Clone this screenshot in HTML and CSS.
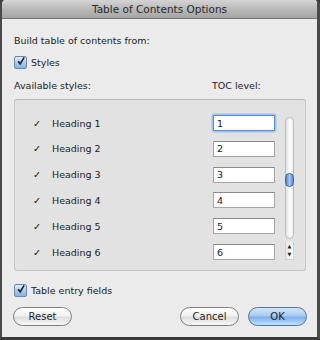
FILE: index.html
```html
<!doctype html>
<html>
<head>
<meta charset="utf-8">
<title>Table of Contents Options</title>
<link rel="stylesheet" href="styles.css">
</head>
<body>
<div class="win">
	<div class="titlebar">Table of Contents Options</div>
	<div class="body">
		<p class="label first">Build table of contents from:</p>
		<label class="check"><span class="box"><svg viewBox="0 0 12 12" width="12" height="12"><path d="M2.6 6.2 L5 9.4 L9.8 1.6" fill="none" stroke="#1d2430" stroke-width="2"/></svg></span>Styles</label>
		<div class="heads">
			<span class="avail">Available styles:</span>
			<span>TOC level:</span>
		</div>
		<div class="group">
			<ul class="rows">
				<li><i>&#10003;</i><span>Heading 1</span><input class="focus" type="text" value="1"></li>
				<li><i>&#10003;</i><span>Heading 2</span><input type="text" value="2"></li>
				<li><i>&#10003;</i><span>Heading 3</span><input type="text" value="3"></li>
				<li><i>&#10003;</i><span>Heading 4</span><input type="text" value="4"></li>
				<li><i>&#10003;</i><span>Heading 5</span><input type="text" value="5"></li>
				<li><i>&#10003;</i><span>Heading 6</span><input type="text" value="6"></li>
			</ul>
			<div class="scroll">
				<div class="track"><div class="thumb"></div></div>
				<div class="arrows"><b>&#9650;</b><b>&#9660;</b></div>
			</div>
		</div>
		<label class="check entry"><span class="box"><svg viewBox="0 0 12 12" width="12" height="12"><path d="M2.6 6.2 L5 9.4 L9.8 1.6" fill="none" stroke="#1d2430" stroke-width="2"/></svg></span>Table entry fields</label>
		<div class="buttons">
			<a class="btn" href="javascript:;">Reset</a>
			<span class="space"></span>
			<a class="btn" href="javascript:;">Cancel</a>
			<a class="btn ok" href="javascript:;">OK</a>
		</div>
	</div>
</div>
</body>
</html>
```
FILE: styles.css
```css
*{padding:0; margin:0; box-sizing:border-box;}
body{width:320px; height:340px; background:#3c3c3c; font-family:"DejaVu Sans", sans-serif; font-size:9.5px; color:#222; overflow:hidden;}
.win{width:320px; height:340px; background:#ebebeb; border-left:2px solid #4a4a4a; border-right:3px solid #4a4a4a; border-bottom:3px solid #3a3a3a; border-radius:5px 5px 0 0; overflow:hidden;}
.titlebar{height:19px; line-height:18px; text-align:center; font-size:10.5px; color:#2a2a2a; background:linear-gradient(#d4d4d4,#b4b4b4 60%,#a6a6a6); border-bottom:1px solid #777;}
.body{padding:0 10px 0 12px;}
.label{line-height:14px;}
.first{margin-top:15px;}
.check{display:flex; align-items:center; height:14px; margin-top:7px;}
.box{width:13px; height:13px; margin-right:4px; border:1px solid #6d87a6; border-radius:2px; background:linear-gradient(#e1edf9,#a9c8ea 55%,#8cb3e0); display:flex; align-items:center; justify-content:center;}
.box svg{display:block; margin-top:-2px; margin-left:1px;}
.heads{display:flex; line-height:14px; margin-top:10px;}
.heads .avail{width:198px;}
.group{display:flex; margin-top:6px; width:292px; height:172px; background:#e2e2e2; border:1px solid #c6c6c6; border-top-color:#b8b8b8; border-radius:3px; padding:10px 11px 0 18px;}
.rows{list-style:none; flex:1;}
.rows li{display:flex; align-items:center; height:26px; margin-bottom:-0.2px;}
.rows i{font-style:normal; font-weight:bold; width:19px; font-size:9.5px; color:#1a1a1a;}
.rows span{flex:1;}
.rows input{width:62px; height:16px; border:1px solid #a5a5a5; border-top-color:#8a8a8a; background:#fff; font-family:"DejaVu Sans", sans-serif; font-size:9.5px; color:#222; padding:0 0 0 3px; outline:none;}
.rows input.focus{border:1px solid #5a8fd0; box-shadow:0 0 0 1.5px #9ec0ea;border-radius:1px;}
.scroll{width:9px; margin-left:10px; margin-top:7px;}
.track{height:122px; border:1px solid #bdbdbd; border-radius:5px; background:linear-gradient(90deg,#e2e2e2,#fff 60%,#ececec); padding-top:55px;}
.thumb{height:14px; margin:0 -1px; border:1px solid #3b62a6; border-radius:5px; background:linear-gradient(90deg,#4f7fcf,#a8c9f2 50%,#5c8ad6);}
.arrows{display:flex; flex-direction:column; align-items:center; width:9px; height:18px; margin-top:3px; background:linear-gradient(90deg,#e8e8e8,#fff); border:1px solid #d0d0d0; border-top:0;}
.arrows b{font-size:5px; line-height:8px; color:#222; font-weight:normal;}
.entry{margin-top:12px;}
.buttons{display:flex; margin-top:10px; margin-left:-1px;}
.space{flex:1;}
.btn{display:block; width:59px; height:19px; line-height:17px; text-align:center; text-decoration:none; color:#1f1f1f; font-size:10px; border:1px solid #7f7f7f; border-radius:10px; background:linear-gradient(#fff,#f1f1f1 45%,#dedede 55%,#f8f8f8); margin-left:9px;}
.btn:first-child{margin-left:0;}
.ok{border-color:#56739a; background:linear-gradient(#d3e6fa,#a5cbf3 45%,#7eb1ec 55%,#bfe0fb);}
```
